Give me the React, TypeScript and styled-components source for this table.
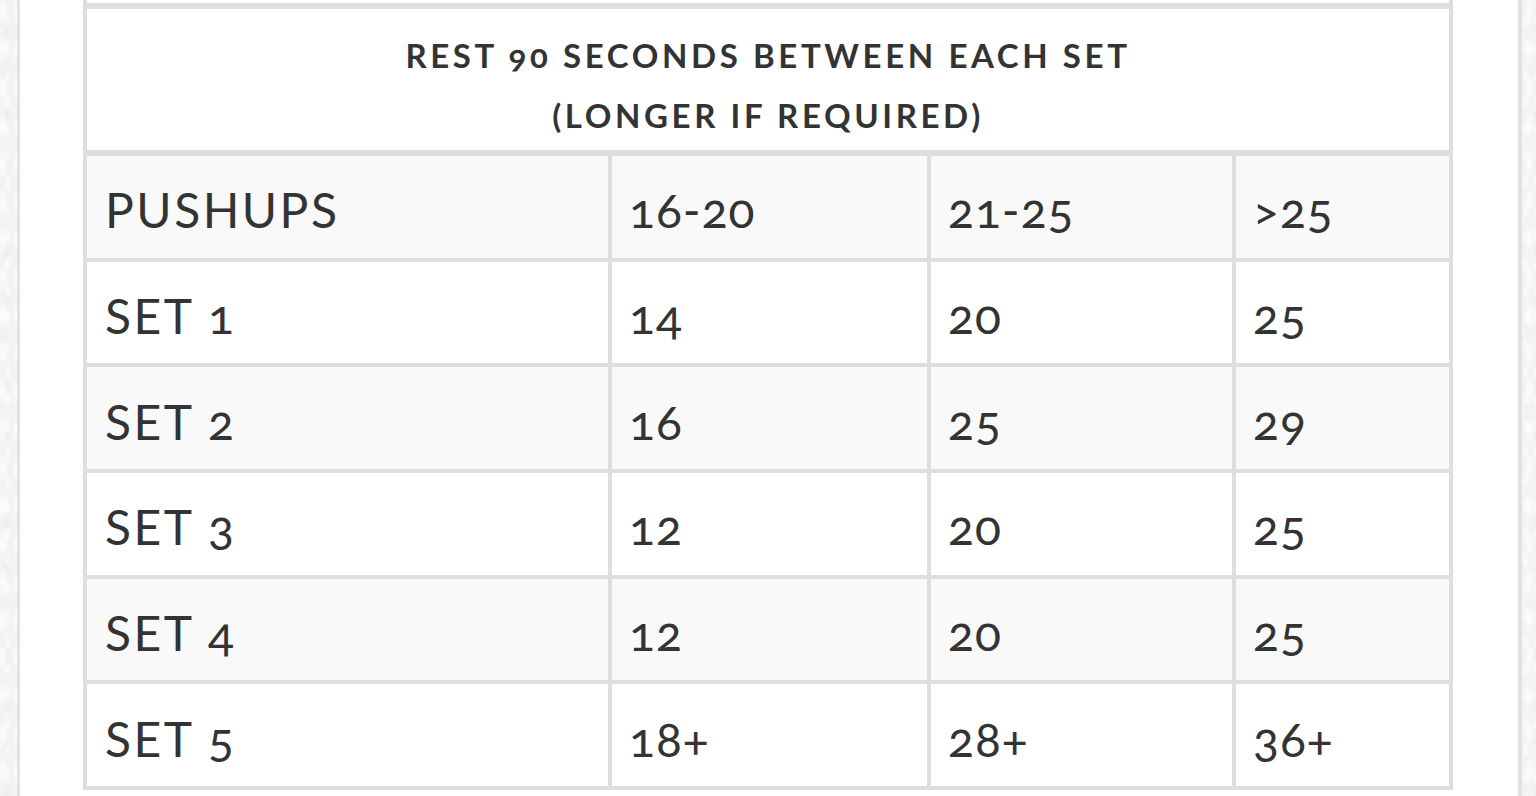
import React from 'react';
import styled, { createGlobalStyle } from 'styled-components';

const GlobalStyle = createGlobalStyle`
  html, body {
    margin: 0;
    height: 100%;
  }

  body {
    background-color: #f3f3f2;
    background-image:
      radial-gradient(ellipse at 20% 30%, rgba(255, 255, 255, 0.8) 0, transparent 40%),
      radial-gradient(ellipse at 70% 80%, rgba(255, 255, 255, 0.7) 0, transparent 35%),
      radial-gradient(ellipse at 40% 60%, rgba(230, 230, 228, 0.6) 0, transparent 30%);
    background-size: 14px 38px, 11px 27px, 17px 45px;
    font-family: Lato, 'Open Sans', sans-serif;
    color: #333;
  }
`;

const border = '#dedede';

const Page = styled.div`
  display: flex;
  min-height: 796px;
  padding: 0 14px 0 17px;
  box-sizing: border-box;
`;

const Panel = styled.main`
  flex: 1;
  background: #fff;
  border-left: 3px solid #e2e2e2;
  border-right: 4px solid #e2e2e2;
  padding: 0 65px 0 63px;
`;

const Table = styled.div`
  border-left: 4px solid ${border};
  border-right: 4px solid ${border};
  border-bottom: 4px solid ${border};
  background: #fff;
`;

// tail end of the row above, cut off by the top of the screen
const PrevRow = styled.div`
  height: 3px;
  border-bottom: 6px solid ${border};
`;

const Caption = styled.div`
  height: 147px;
  box-sizing: border-box;
  padding-top: 16px;
  border-bottom: 6px solid ${border};
  text-align: center;
  font-size: 33px;
  font-weight: 700;
  line-height: 60px;
  letter-spacing: 3.6px;
  text-transform: uppercase;
  font-variant-numeric: oldstyle-nums;
`;

const Grid = styled.div`
  display: grid;
  grid-template-columns: 521px 315px 301px 213px;
  grid-template-rows: repeat(6, 1fr);
  height: 630px;
  gap: 4px;
  background: ${border};
`;

interface CellProps {
  $striped?: boolean;
}

const Cell = styled.div<CellProps>`
  display: flex;
  align-items: center;
  padding: 6px 0 0 17px;
  background: ${({ $striped }) => ($striped ? '#f9f9f9' : '#fff')};
  font-size: 48px;
  letter-spacing: 1px;
  font-variant-numeric: oldstyle-nums;
`;

const LabelCell = styled(Cell)`
  padding-left: 18px;
  letter-spacing: 2.5px;
`;

const rows: string[][] = [
  ['PUSHUPS', '16-20', '21-25', '>25'],
  ['SET 1', '14', '20', '25'],
  ['SET 2', '16', '25', '29'],
  ['SET 3', '12', '20', '25'],
  ['SET 4', '12', '20', '25'],
  ['SET 5', '18+', '28+', '36+'],
];

export default function App() {
  return (
    <>
      <GlobalStyle />
      <Page>
        <Panel>
          <Table>
            <PrevRow />
            <Caption>
              Rest 90 seconds between each set
              <br />
              (longer if required)
            </Caption>
            <Grid>
              {rows.map((row, i) =>
                row.map((value, j) =>
                  j === 0 ? (
                    <LabelCell key={`${i}-${j}`} $striped={i % 2 === 0}>
                      {value}
                    </LabelCell>
                  ) : (
                    <Cell key={`${i}-${j}`} $striped={i % 2 === 0}>
                      {value}
                    </Cell>
                  )
                )
              )}
            </Grid>
          </Table>
        </Panel>
      </Page>
    </>
  );
}
